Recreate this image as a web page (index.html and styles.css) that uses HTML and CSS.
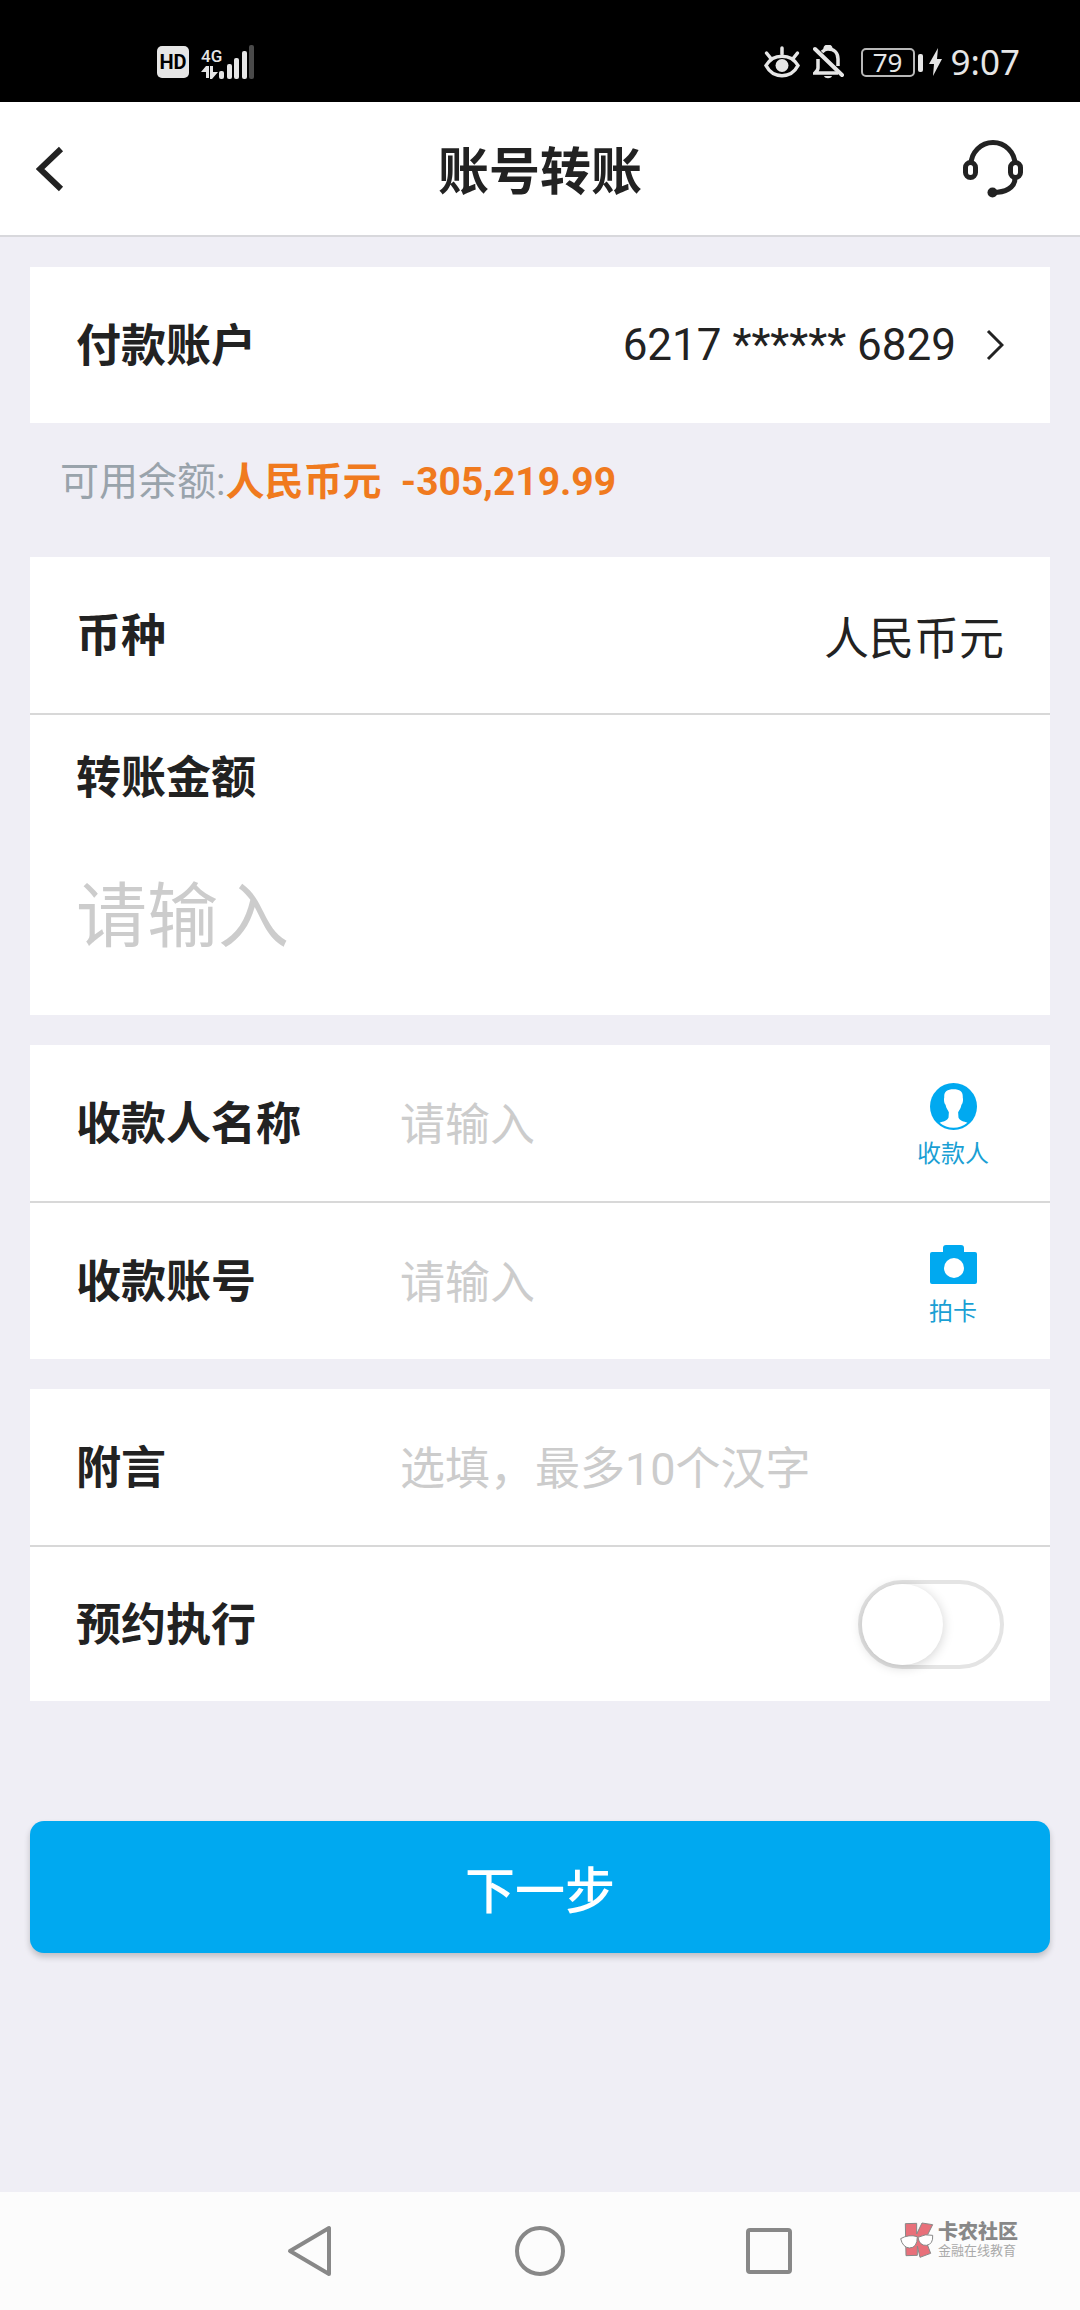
FILE: index.html
```html
<!DOCTYPE html>
<html lang="zh-CN">

<head>
  <meta charset="UTF-8" />
  <meta name="viewport" content="width=device-width, initial-scale=1.0" />
  <title>账号转账</title>
  <link rel="stylesheet" href="styles.css">
</head>

<body>
  <div class="status-bar">
    <div class="status-left">
      <span class="hd-badge">HD</span>
      <div class="network">
        <span class="network-type">4G</span>
        <svg width="17" height="13" viewBox="0 0 17 13" fill="#e6e6e6">
          <path d="M5 0h3v12H5V6H0z" />
          <path d="M9 0h3v6h5l-6 7H9z" />
        </svg>
      </div>
      <svg width="36" height="34" viewBox="0 0 36 34" fill="#e6e6e6">
        <rect x="0" y="26" width="5" height="8" rx="2" />
        <rect x="8" y="19" width="5" height="15" rx="2" />
        <rect x="15" y="13" width="5" height="21" rx="2" />
        <rect x="23" y="6" width="5" height="28" rx="2" />
        <rect x="30" y="0" width="5" height="34" rx="2" fill="#4a4a4a" />
      </svg>
    </div>
    <div class="status-right">
      <svg class="icon-eye" width="36" height="32" viewBox="0 0 36 32" fill="none" stroke="#e6e6e6" stroke-width="3.500" stroke-linecap="round">
        <path d="M2 19.500C9 7 27 7 34 19.500C27 33 9 33 2 19.500Z" />
        <circle cx="18" cy="19.500" r="6.500" fill="#e6e6e6" stroke="none" />
        <path d="M18 2v6M2.500 7l4 5M33.500 7l-4 5" />
      </svg>
      <svg class="icon-bell" width="32" height="34" viewBox="0 0 32 34" fill="none" stroke="#e6e6e6" stroke-width="3.500">
        <path d="M5 14v9c0 2-1 3-3 5h23M9 7c2-2 4-3 6-3c6 0 10 4 10 10v7" />
        <path d="M12 5c0-5 6-5 6 0" />
        <path d="M2 4l27 26" stroke-width="4" stroke-linecap="round" />
        <path d="M11 31h8c-1 3-7 3-8 0z" fill="#e6e6e6" stroke="none" />
      </svg>
      <div class="battery">79</div>
      <svg class="icon-bolt" width="13" height="28" viewBox="0 0 13 28" fill="#e6e6e6">
        <path d="M9 0L0 16h5L4 28l9-17H8z" />
      </svg>
      <span class="time">9:07</span>
    </div>
  </div>

  <header class="header">
    <button class="icon-btn" type="button" aria-label="返回">
      <svg width="28" height="46" viewBox="0 0 28 46" fill="none" stroke="#222" stroke-width="6">
        <path d="M25 3L4 23L25 43" />
      </svg>
    </button>
    <h1>账号转账</h1>
    <button class="icon-btn icon-btn-right" type="button" aria-label="客服">
      <svg width="60" height="58" viewBox="0 0 60 58" fill="none" stroke="#222" stroke-width="5">
        <path d="M8 24.500a22 22 0 0 1 44 0" />
        <rect x="2.500" y="22.500" width="10" height="15" rx="5" />
        <rect x="47.500" y="22.500" width="10" height="15" rx="5" />
        <path d="M52 38C52 48 42 52.500 30 52.500" />
        <circle cx="29.500" cy="52.500" r="5" fill="#222" stroke="none" />
      </svg>
    </button>
  </header>

  <main class="content">
    <form class="transfer-form">
      <div class="card">
        <button class="row row-btn" type="button">
          <span class="label">付款账户</span>
          <span class="value card-number">6217 ****** 6829</span>
          <svg class="chevron" width="18" height="32" viewBox="0 0 18 32" fill="none" stroke="#222" stroke-width="3">
            <path d="M2 2L16 16L2 30" />
          </svg>
        </button>
      </div>

      <p class="balance">可用余额:<strong>人民币元&nbsp; -305,219.99</strong></p>

      <div class="card">
        <div class="row">
          <span class="label">币种</span>
          <span class="value">人民币元</span>
        </div>
        <div class="amount">
          <label class="label" for="amount">转账金额</label>
          <input id="amount" class="amount-input" type="text" inputmode="decimal" placeholder="请输入" />
        </div>
      </div>

      <div class="card">
        <div class="row">
          <label class="label" for="payee-name">收款人名称</label>
          <input id="payee-name" type="text" placeholder="请输入" />
          <button class="side-btn" type="button">
            <svg width="47" height="47" viewBox="147 68 142 142">
              <circle cx="218" cy="139" r="71" fill="#00a9f0" />
              <path fill="#fff" d="M218 87C198 87 189 94 190 112C188 120 190 130 194 134C196 145 201 150 204 156L203 172C200 182 186 184 176 188A66 66 0 0 0 260 188C250 184 236 182 233 172L232 156C236 150 240 145 242 134C246 130 248 120 246 112C247 94 238 87 218 87Z" />
            </svg>
            收款人
          </button>
        </div>
        <div class="row">
          <label class="label" for="payee-account">收款账号</label>
          <input id="payee-account" type="text" inputmode="numeric" placeholder="请输入" />
          <button class="side-btn" type="button">
            <svg width="47" height="47" viewBox="0 0 47 47">
              <path fill="#00a9f0" d="M2 11H13V7Q13 4 16 4H31Q34 4 34 7V11H45Q47 11 47 13V41Q47 43 45 43H2Q0 43 0 41V13Q0 11 2 11Z" />
              <circle cx="24" cy="27" r="10" fill="#fff" />
            </svg>
            拍卡
          </button>
        </div>
      </div>

      <div class="card">
        <div class="row">
          <label class="label" for="remark">附言</label>
          <input id="remark" type="text" placeholder="选填，最多10个汉字" />
        </div>
        <div class="row row-switch">
          <label class="label" for="schedule">预约执行</label>
          <input id="schedule" class="switch" type="checkbox" role="switch" />
        </div>
      </div>

      <button class="submit-btn" type="submit">下一步</button>
    </form>
  </main>

  <nav class="nav-bar">
    <button class="nav-btn" type="button" aria-label="后退">
      <svg width="50" height="52" viewBox="0 0 50 52" fill="none" stroke="#888" stroke-width="4" stroke-linejoin="round">
        <path d="M4 26L43 3V49Z" />
      </svg>
    </button>
    <button class="nav-btn" type="button" aria-label="主屏幕">
      <svg width="50" height="50" viewBox="0 0 50 50" fill="none" stroke="#888" stroke-width="4">
        <circle cx="25" cy="25" r="23" />
      </svg>
    </button>
    <button class="nav-btn" type="button" aria-label="最近任务">
      <svg width="46" height="46" viewBox="0 0 46 46" fill="none" stroke="#888" stroke-width="4">
        <rect x="2" y="2" width="42" height="42" rx="2" />
      </svg>
    </button>
    <div class="watermark">
      <svg width="34" height="36" viewBox="0 0 102 108" stroke="#888" stroke-width="3">
        <path fill="#e8707a" d="M16 5L50 4V36L66 3L98 8L76 52L92 94L60 106L52 72V100L18 101Z" />
        <path fill="#fff" d="M2 50Q26 36 52 44Q52 78 28 78Q8 76 2 50Z" />
        <path fill="#fff" d="M54 46Q76 34 98 40Q100 66 80 70Q58 72 54 46Z" />
      </svg>
      <div>
        <div class="watermark-name">卡农社区</div>
        <div class="watermark-sub">金融在线教育</div>
      </div>
    </div>
  </nav>
</body>

</html>
```
FILE: styles.css
```css
/* Base Styles */
* {
  box-sizing: border-box;
  margin: 0;
  padding: 0;
}

body {
  font-family: Roboto, "Noto Sans CJK SC", sans-serif;
  min-height: 100vh;
  display: flex;
  flex-direction: column;
  background-color: #efeef5;
  color: #222;
}

button,
input {
  font-family: inherit;
  color: inherit;
  border: none;
  background: none;
  outline: none;
}

button {
  cursor: pointer;
}

svg {
  display: block;
  flex-shrink: 0;
}

/* Status bar */
.status-bar {
  height: 102px;
  padding: 22px 60px 0 157px;
  display: flex;
  justify-content: space-between;
  align-items: center;
  background-color: #000;
  color: #e6e6e6;
}

.status-left,
.status-right {
  display: flex;
  align-items: center;
}

.hd-badge {
  width: 32px;
  height: 32px;
  margin-right: 12px;
  border-radius: 5px;
  background-color: #e6e6e6;
  color: #000;
  font-size: 20px;
  font-weight: 700;
  line-height: 32px;
  text-align: center;
}

.network {
  width: 18px;
}

.network-type {
  display: block;
  font-size: 17px;
  font-weight: 500;
  line-height: 20px;
}

.icon-eye {
  margin-right: 13px;
}

.icon-bell {
  margin-right: 16px;
}

.battery {
  position: relative;
  width: 54px;
  height: 29px;
  margin-right: 14px;
  border: 2px solid #b8b8b8;
  border-radius: 5px;
  font-family: "Noto Sans", sans-serif;
  font-size: 26px;
  line-height: 25px;
  text-align: center;
}

.battery::after {
  content: "";
  position: absolute;
  top: 4px;
  right: -10px;
  width: 5px;
  height: 18px;
  border-radius: 2px;
  background-color: #e6e6e6;
}

.icon-bolt {
  margin-right: 9px;
}

.time {
  font-family: "Noto Sans", sans-serif;
  font-size: 35px;
  line-height: 40px;
}

/* Header */
.header {
  height: 135px;
  padding: 0 36px;
  display: grid;
  grid-template-columns: 1fr auto 1fr;
  align-items: center;
  background-color: #fff;
  border-bottom: 2px solid #d8d8dc;
}

.header h1 {
  padding-top: 8px;
  font-size: 51px;
  font-weight: 700;
  line-height: 60px;
}

.icon-btn {
  justify-self: start;
}

.icon-btn-right {
  justify-self: end;
  margin-right: 21px;
}

/* Form */
.content {
  flex: 1;
  padding: 30px;
}

.card {
  background-color: #fff;
}

.card + .card {
  margin-top: 30px;
}

.row {
  width: 100%;
  min-height: 156px;
  padding: 0 46px;
  display: flex;
  align-items: center;
  font-size: 45px;
}

.row + .row,
.amount {
  border-top: 2px solid #d8d8d8;
}

.row + .row {
  min-height: 158px;
}

.row + .row-switch {
  min-height: 156px;
}

.row-btn {
  text-align: left;
}

.label {
  width: 324px;
  padding-top: 4px;
  flex-shrink: 0;
  font-size: 45px;
  font-weight: 700;
  line-height: 60px;
}

.value {
  margin-left: auto;
}

.card-number {
  font-size: 44px;
}

.chevron {
  margin-left: 30px;
}

.row input {
  min-width: 0;
  flex: 1;
  height: 64px;
  padding-top: 4px;
  font-size: 45px;
}

input::placeholder {
  color: #ccc;
  opacity: 1;
}

.balance {
  padding: 29px 30px 45px;
  color: #99a3ab;
  font-size: 39px;
  line-height: 60px;
}

.balance strong {
  color: #f07a1e;
  font-weight: 700;
}

.amount {
  padding: 30px 46px 48px;
  display: flex;
  flex-direction: column;
  gap: 56px;
}

.amount-input {
  width: 100%;
  height: 102px;
  font-size: 71px;
}

.side-btn {
  width: 102px;
  padding-top: 2px;
  display: flex;
  flex-direction: column;
  align-items: center;
  gap: 12px;
  color: #1a9fd4;
  font-size: 24px;
  line-height: 24px;
}

/* Switch */
.row .switch {
  appearance: none;
  flex: none;
  width: 146px;
  height: 89px;
  margin-left: auto;
  padding: 0;
  border: 4px solid #e4e4e4;
  border-radius: 45px;
  cursor: pointer;
}

.switch::before {
  content: "";
  display: block;
  width: 81px;
  height: 81px;
  border-radius: 50%;
  background-color: #fff;
  box-shadow: 0 2px 12px rgba(0, 0, 0, 0.18);
}

.switch:checked {
  background-color: #00a9f0;
}

.switch:checked::before {
  margin-left: auto;
}

/* Submit */
.submit-btn {
  display: block;
  width: 100%;
  height: 132px;
  margin-top: 120px;
  border-radius: 14px;
  background-color: #00a9f0;
  box-shadow: 0 4px 6px rgba(0, 0, 0, 0.2);
  color: #fff;
  font-size: 50px;
  font-weight: 500;
}

/* Navigation bar */
.nav-bar {
  position: relative;
  height: 118px;
  display: flex;
  justify-content: center;
  align-items: center;
  background-color: #fcfcfc;
}

.nav-btn {
  width: 229px;
  height: 100%;
  display: flex;
  justify-content: center;
  align-items: center;
}

.watermark {
  position: absolute;
  top: 30px;
  right: 62px;
  display: flex;
  align-items: center;
  gap: 4px;
  color: #888;
}

.watermark-name {
  font-size: 20px;
  font-weight: 900;
  line-height: 21px;
}

.watermark-sub {
  color: #aaa;
  font-size: 13px;
  line-height: 15px;
}
```
